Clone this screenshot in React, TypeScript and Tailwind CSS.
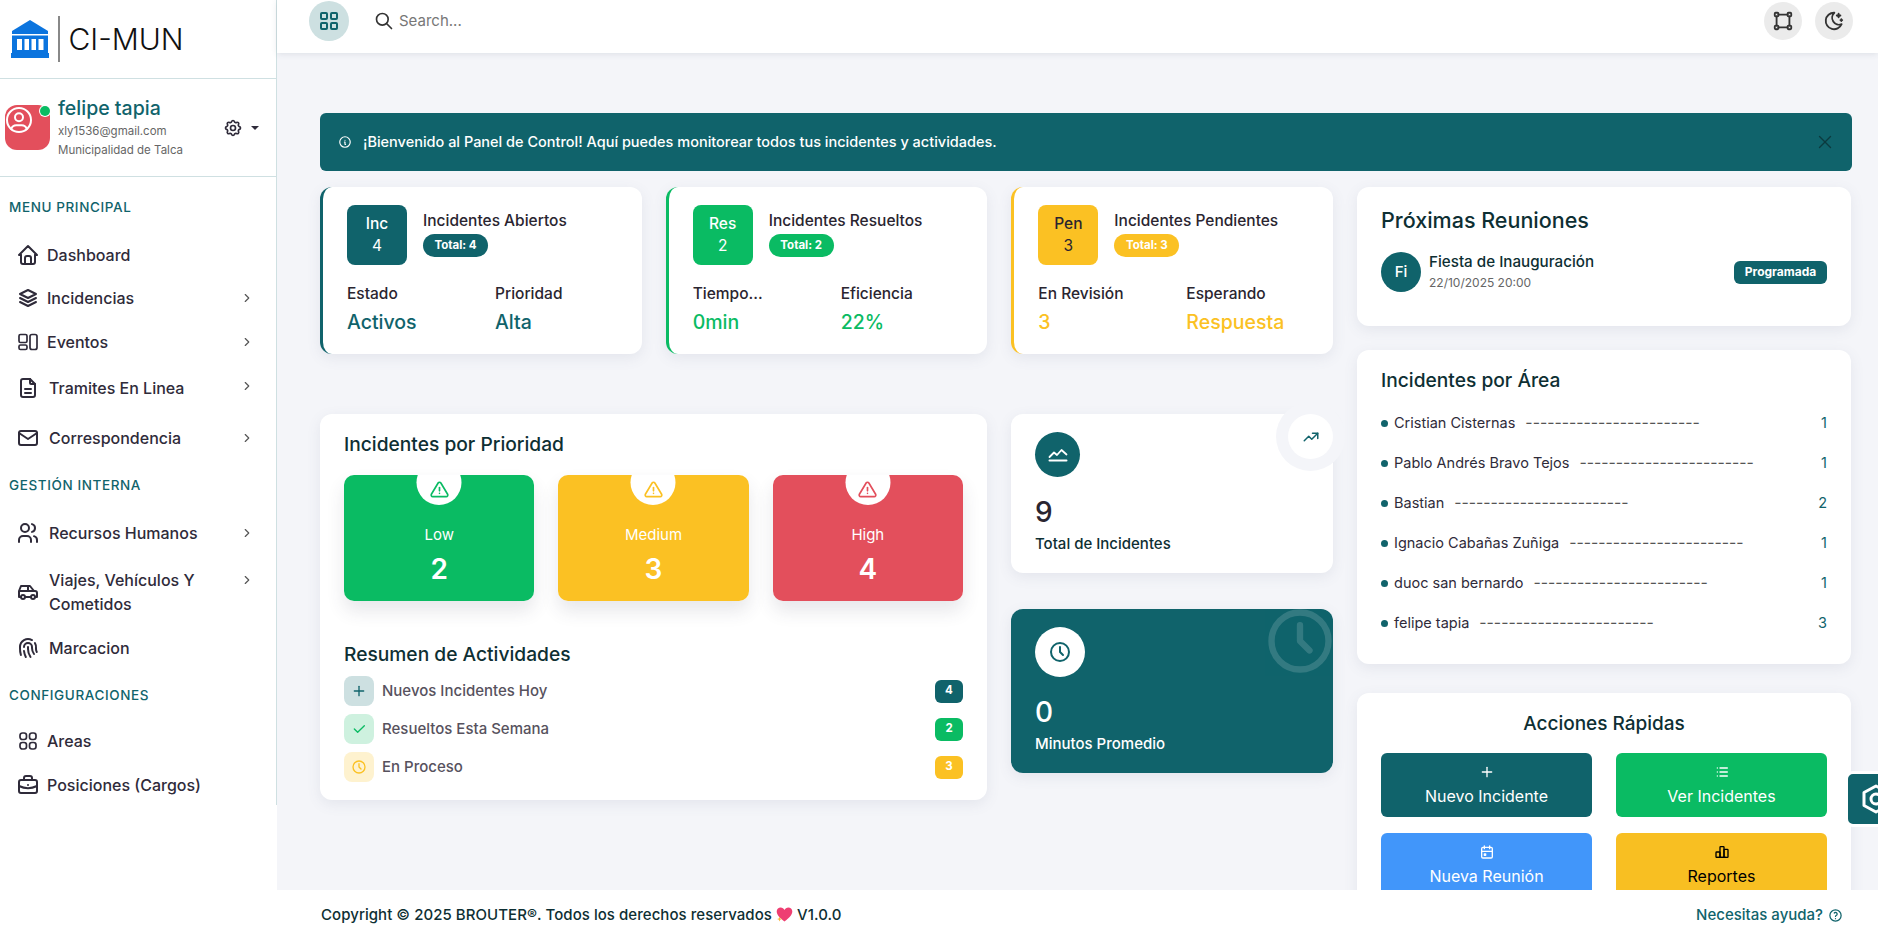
import {
  TbAlertTriangle,
  TbBriefcase,
  TbCalendarEvent,
  TbCar,
  TbCheck,
  TbChartBar,
  TbChevronRight,
  TbClock,
  TbFileDescription,
  TbFingerprint,
  TbHelp,
  TbHome,
  TbInfoCircle,
  TbLayoutGrid,
  TbList,
  TbMail,
  TbMoonStars,
  TbPlus,
  TbSearch,
  TbSettings,
  TbStack2,
  TbTrendingUp,
  TbUserCircle,
  TbUsers,
  TbVector,
  TbX,
} from "react-icons/tb";

const BankLogo = () => (
  <svg width="38" height="38" viewBox="0 0 38 38" fill="#0b74de">
    <path d="M19 0 L37 11 V14 H1 V11 Z" />
    <path d="M1 15.500h36v17.500H1z" />
    <path d="M0 33h38v5H0z" />
    <path d="M6 19h5v11H6zM13.500 19h4.500v11h-4.500zM20.500 19h4.500v11h-4.500zM27.500 19h5v11h-5z" fill="#fff" />
  </svg>
);

const EventIcon = () => (
  <svg width="20" height="20" viewBox="0 0 20 20" fill="none" stroke="currentColor" strokeWidth="1.700">
    <rect x="1" y="2.500" width="8" height="8" rx="1.500" />
    <rect x="1" y="13" width="8" height="4.500" rx="1.500" />
    <rect x="12" y="2.500" width="7" height="15" rx="2" />
  </svg>
);

const AreasIcon = () => (
  <svg width="20" height="20" viewBox="0 0 20 20" fill="none" stroke="currentColor" strokeWidth="1.700">
    <rect x="2" y="2" width="6.500" height="6.500" rx="2.400" />
    <rect x="11.500" y="2" width="6.500" height="6.500" rx="2.400" />
    <rect x="2" y="11.500" width="6.500" height="6.500" rx="2.400" />
    <rect x="11.500" y="11.500" width="6.500" height="6.500" rx="2.400" />
  </svg>
);

const AreaChartIcon = () => (
  <svg width="20" height="20" viewBox="0 0 20 20" fill="none" stroke="#fff" strokeWidth="1.800" strokeLinecap="round" strokeLinejoin="round">
    <path d="M1.500 12 L6 7.500 L9 10 L13.500 5 L18.500 9.500" />
    <path d="M1.500 15.500 H18.500" strokeWidth="2" />
  </svg>
);

const HexGear = () => (
  <svg width="30" height="30" viewBox="0 0 30 30" fill="none" stroke="currentColor" strokeWidth="3" strokeLinejoin="round">
    <path d="M15 2 L27 8.500 V21.500 L15 28 L3 21.500 V8.500 Z" />
    <circle cx="15" cy="15" r="5" />
  </svg>
);

const Heart = () => (
  <svg width="17" height="17" viewBox="0 0 24 24" className="inline-block align-[-3px]">
    <path d="M12 22 C4 16 1 12 1 7.500 C1 4 3.800 2 6.500 2 C9 2 11 3.500 12 5.500 C13 3.500 15 2 17.500 2 C20.200 2 23 4 23 7.500 C23 12 20 16 12 22 Z" fill="#ee3f72" />
    <path d="M5 15 l1 2.500 2.500 1 -2.500 1 -1 2.500 -1 -2.500 -2.500 -1 2.500 -1z" fill="#f9b53c" />
  </svg>
);

const menuText = "text-[16px] font-medium text-[#2f2b3a]";

function MenuItem({
  icon,
  label,
  h,
  arrow = true,
  gap = "gap-[7px]",
  arrowPos = "",
}: {
  icon: React.ReactNode;
  label: string;
  h: string;
  arrow?: boolean;
  gap?: string;
  arrowPos?: string;
}) {
  return (
    <div className={`flex items-center pl-[16px] pr-[22px] ${h}`}>
      <div className={`flex flex-1 items-center ${gap} ${menuText}`}>
        <span className="flex w-[24px] shrink-0 justify-center">{icon}</span>
        <span className="leading-[24px]">{label}</span>
      </div>
      {arrow && <TbChevronRight size={14} className={`text-[#555] ${arrowPos}`} />}
    </div>
  );
}

function SectionTitle({ children, h }: { children: string; h: string }) {
  return (
    <div className={`flex items-center pl-[9px] text-[13.500px] font-medium tracking-[0.6px] text-[#10636b] ${h}`}>
      {children}
    </div>
  );
}

function Sidebar() {
  return (
    <aside className="h-full w-[277px] shrink-0 bg-white">
      <div className="h-[805px] border-r border-[#cfe0e2]">
        <div className="flex h-[79px] items-center border-b border-[#cfe0e2] pl-[11px]">
          <BankLogo />
          <div className="mx-[9px] h-[46px] w-[1.500px] bg-[#888]" />
          <span className="text-[30px] font-light leading-none text-[#111]">CI-MUN</span>
        </div>
        <div className="flex h-[98px] items-center border-b border-[#cfe0e2] pl-[5px] pr-[17px]">
          <div className="relative h-[45px] w-[45px] shrink-0 rounded-xl bg-[#e34f5c] text-white">
            <TbUserCircle size={32} className="absolute left-[-2px] top-[-1px]" strokeWidth={1.500} />
            <span className="absolute right-0 top-[1px] h-[10px] w-[10px] rounded-full bg-[#0abb63] ring-1 ring-white" />
          </div>
          <div className="ml-[8px] flex-1">
            <div className="text-[19.500px] font-medium leading-[24px] text-[#10636b]">felipe tapia</div>
            <div className="mt-[2px] text-[11.500px] leading-[19px] text-[#666]">xly1536@gmail.com</div>
            <div className="text-[11.500px] leading-[19px] text-[#666]">Municipalidad de Talca</div>
          </div>
          <TbSettings size={20} className="text-[#2f2b3a]" />
          <span className="ml-[8px] h-0 w-0 border-x-[4px] border-t-[4px] border-x-transparent border-t-[#2f2b3a]" />
        </div>
        <SectionTitle h="h-[60px]">MENU PRINCIPAL</SectionTitle>
        <MenuItem h="h-[42px] mt-[-3px]" arrow={false} icon={<TbHome size={24} />} label="Dashboard" />
        <MenuItem h="h-[44px]" icon={<TbStack2 size={24} />} label="Incidencias" />
        <MenuItem h="h-[44px]" icon={<EventIcon />} label="Eventos" />
        <MenuItem h="h-[48px]" gap="gap-[9px]" arrowPos="mt-[-4px]" icon={<TbFileDescription size={24} />} label="Tramites En Linea" />
        <MenuItem h="h-[51px]" gap="gap-[9px]" icon={<TbMail size={24} />} label="Correspondencia" />
        <SectionTitle h="h-[44px]">GESTIÓN INTERNA</SectionTitle>
        <MenuItem h="h-[52px]" gap="gap-[9px]" icon={<TbUsers size={24} />} label="Recursos Humanos" />
        <MenuItem h="h-[66px]" gap="gap-[9px]" arrowPos="mt-[-24px]" icon={<TbCar size={24} />} label="Viajes, Vehículos Y Cometidos" />
        <MenuItem h="h-[46px]" arrow={false} gap="gap-[9px]" icon={<TbFingerprint size={24} />} label="Marcacion" />
        <SectionTitle h="h-[48px]">CONFIGURACIONES</SectionTitle>
        <MenuItem h="h-[44px]" arrow={false} icon={<AreasIcon />} label="Areas" />
        <MenuItem h="h-[43px]" arrow={false} icon={<TbBriefcase size={24} />} label="Posiciones (Cargos)" />
      </div>
    </aside>
  );
}

function Header() {
  return (
    <header className="relative z-10 flex h-[53px] shrink-0 items-center bg-white pl-[32px] pr-[25px] pb-[12px] shadow-[0_1px_6px_rgba(60,70,90,0.12)]">
      <div className="flex h-[40px] w-[40px] items-center justify-center rounded-full bg-[#cde0e1] text-[#10636b]">
        <TbLayoutGrid size={24} />
      </div>
      <TbSearch size={20} className="ml-[25px] mt-[1px] text-[#333]" />
      <span className="ml-[5px] mt-[1px] flex-1 text-[15px] text-[#777]">Search...</span>
      <div className="flex h-[38px] w-[38px] items-center justify-center rounded-full bg-[#ebebeb] text-[#333]">
        <TbVector size={22} />
      </div>
      <div className="ml-[13px] flex h-[38px] w-[38px] items-center justify-center rounded-full bg-[#ebebeb] text-[#333]">
        <TbMoonStars size={22} />
      </div>
    </header>
  );
}

function StatCard({
  border,
  box,
  boxText,
  code,
  value,
  title,
  total,
  l1,
  l2,
  v1,
  v2,
  valueColor,
}: {
  border: string;
  box: string;
  boxText: string;
  code: string;
  value: string;
  title: string;
  total: string;
  l1: string;
  l2: string;
  v1: string;
  v2: string;
  valueColor: string;
}) {
  return (
    <div className={`h-[167px] rounded-xl border-l-[3px] bg-white pl-[24px] pr-[16px] pt-[18px] shadow-[0_4px_14px_rgba(90,100,130,0.1)] ${border}`}>
      <div className="flex">
        <div className={`flex h-[60px] w-[60px] flex-col items-center justify-center rounded-lg text-[15.500px] font-medium leading-[22px] ${box} ${boxText}`}>
          <span>{code}</span>
          <span className="font-normal">{value}</span>
        </div>
        <div className="ml-[16px]">
          <div className="mt-[6px] whitespace-nowrap text-[15.500px] font-medium leading-[20px] text-[#2a2530]">{title}</div>
          <div className={`mt-[3px] flex h-[23px] w-[65px] items-center justify-center rounded-full text-[11.500px] font-bold text-white ${box}`}>
            {total}
          </div>
        </div>
      </div>
      <div className="mt-[19px] grid grid-cols-[148px_1fr]">
        <div>
          <div className="truncate pr-[4px] text-[15.500px] font-medium leading-[20px] text-[#2a2530]">{l1}</div>
          <div className={`mt-[6px] text-[19.500px] font-medium leading-[24px] ${valueColor}`}>{v1}</div>
        </div>
        <div>
          <div className="text-[15.500px] font-medium leading-[20px] text-[#2a2530]">{l2}</div>
          <div className={`mt-[6px] text-[19.500px] font-medium leading-[24px] ${valueColor}`}>{v2}</div>
        </div>
      </div>
    </div>
  );
}

function PriorityBox({ bg, text, label, value }: { bg: string; text: string; label: string; value: string }) {
  return (
    <div className="rounded-[10px] shadow-[0_10px_18px_rgba(60,60,80,0.12)]">
      <div className={`relative flex h-[126px] flex-col items-center overflow-hidden rounded-[10px] pt-[49px] text-white ${bg}`}>
        <div className={`absolute left-1/2 top-[-15px] flex h-[45px] w-[45px] -translate-x-1/2 items-center justify-center rounded-full bg-white pt-[15px] ${text}`}>
          <TbAlertTriangle size={20} />
        </div>
        <div className="text-[15px] leading-[22px]">{label}</div>
        <div className="mt-[6px] text-[28px] font-semibold leading-[34px]">{value}</div>
      </div>
    </div>
  );
}

function ActivityRow({
  icon,
  iconBg,
  label,
  value,
  badge,
}: {
  icon: React.ReactNode;
  iconBg: string;
  label: string;
  value: string;
  badge: string;
}) {
  return (
    <div className="flex h-[30px] items-center">
      <div className={`flex h-[30px] w-[30px] items-center justify-center rounded-lg ${iconBg}`}>{icon}</div>
      <span className="ml-[8px] flex-1 text-[15px] font-medium text-[#57525e]">{label}</span>
      <span className={`flex h-[23px] w-[28px] items-center justify-center rounded-md text-[11.500px] font-bold text-white ${badge}`}>
        {value}
      </span>
    </div>
  );
}

const areas = [
  ["Cristian Cisternas", "1"],
  ["Pablo Andrés Bravo Tejos", "1"],
  ["Bastian", "2"],
  ["Ignacio Cabañas Zuñiga", "1"],
  ["duoc san bernardo", "1"],
  ["felipe tapia", "3"],
];

function QuickButton({
  icon,
  label,
  className,
}: {
  icon: React.ReactNode;
  label: string;
  className: string;
}) {
  return (
    <div className={`flex h-[64px] flex-col items-center justify-center rounded-md pt-[2px] ${className}`}>
      {icon}
      <span className="mt-[4px] text-[16px] leading-[24px]">{label}</span>
    </div>
  );
}

const card = "rounded-xl bg-white shadow-[0_4px_14px_rgba(90,100,130,0.1)]";

export default function App() {
  return (
    <div className="flex h-screen w-full overflow-hidden bg-[#f4f5f9] [font-family:Inter,sans-serif]">
      <Sidebar />
      <div className="relative flex h-full min-w-0 flex-1 flex-col">
        <Header />
        <main className="min-h-0 flex-1 overflow-hidden pl-[43px] pr-[26px] pt-[60px]">
          <div className="flex h-[58px] items-center rounded-[6px] bg-[#10636b] pl-[18px] pr-[16px] text-[14.500px] font-medium text-white">
            <TbInfoCircle size={14} />
            <span className="ml-[11px] flex-1">¡Bienvenido al Panel de Control! Aquí puedes monitorear todos tus incidentes y actividades.</span>
            <TbX size={22} strokeWidth={1.500} className="text-[#0b3a3f]" />
          </div>

          <div className="mt-[16px] grid grid-cols-[1013px_494px] gap-x-[24px]">
            <div>
              <div className="grid grid-cols-3 gap-x-[24px]">
                <StatCard
                  border="border-[#10636b]"
                  box="bg-[#10636b]"
                  boxText="text-white"
                  code="Inc"
                  value="4"
                  title="Incidentes Abiertos"
                  total="Total: 4"
                  l1="Estado"
                  l2="Prioridad"
                  v1="Activos"
                  v2="Alta"
                  valueColor="text-[#10636b]"
                />
                <StatCard
                  border="border-[#0abb63]"
                  box="bg-[#0abb63]"
                  boxText="text-white"
                  code="Res"
                  value="2"
                  title="Incidentes Resueltos"
                  total="Total: 2"
                  l1="Tiempo..."
                  l2="Eficiencia"
                  v1="0min"
                  v2="22%"
                  valueColor="text-[#0abb63]"
                />
                <StatCard
                  border="border-[#fbc123]"
                  box="bg-[#fbc123]"
                  boxText="text-[#2a2530]"
                  code="Pen"
                  value="3"
                  title="Incidentes Pendientes"
                  total="Total: 3"
                  l1="En Revisión"
                  l2="Esperando"
                  v1="3"
                  v2="Respuesta"
                  valueColor="text-[#fbc123]"
                />
              </div>

              <div className="mt-[60px] grid grid-cols-[667px_322px] gap-x-[24px]">
                <div className={`h-[386px] px-[24px] pt-[18px] ${card}`}>
                  <h2 className="text-[19.200px] font-medium leading-[24px] text-[#0e2f33]">Incidentes por Prioridad</h2>
                  <div className="mt-[19px] grid grid-cols-3 gap-x-[24px]">
                    <PriorityBox bg="bg-[#0abb63]" text="text-[#0abb63]" label="Low" value="2" />
                    <PriorityBox bg="bg-[#fbc123]" text="text-[#fbc123]" label="Medium" value="3" />
                    <PriorityBox bg="bg-[#e34f5c]" text="text-[#e34f5c]" label="High" value="4" />
                  </div>
                  <h2 className="mt-[41px] text-[19.200px] font-medium leading-[24px] text-[#0e2f33]">Resumen de Actividades</h2>
                  <div className="mt-[10px] flex flex-col gap-y-[8px]">
                    <ActivityRow
                      iconBg="bg-[#cde0e1]"
                      icon={<TbPlus size={16} className="text-[#10636b]" />}
                      label="Nuevos Incidentes Hoy"
                      value="4"
                      badge="bg-[#10636b]"
                    />
                    <ActivityRow
                      iconBg="bg-[#cef1df]"
                      icon={<TbCheck size={16} className="text-[#0abb63]" />}
                      label="Resueltos Esta Semana"
                      value="2"
                      badge="bg-[#0abb63]"
                    />
                    <ActivityRow
                      iconBg="bg-[#fef2cf]"
                      icon={<TbClock size={16} className="text-[#fbc123]" />}
                      label="En Proceso"
                      value="3"
                      badge="bg-[#fbc123]"
                    />
                  </div>
                </div>

                <div className="flex flex-col gap-y-[36px]">
                  <div className={`relative h-[159px] pl-[24px] pt-[18px] ${card}`}>
                    <div className="flex h-[45px] w-[45px] items-center justify-center rounded-full bg-[#10636b]">
                      <AreaChartIcon />
                    </div>
                    <div className="mt-[17px] text-[28px] font-medium leading-[36px] text-[#2a2530]">9</div>
                    <div className="mt-[4px] text-[15px] font-medium leading-[20px] text-[#0e2f33]">Total de Incidentes</div>
                    <div className="absolute right-0 top-0 flex h-[45px] w-[45px] items-center justify-center rounded-full bg-white text-[#10636b] ring-[12px] ring-[#f4f5f9]">
                      <TbTrendingUp size={18} />
                    </div>
                  </div>
                  <div className="relative h-[164px] overflow-hidden rounded-xl bg-[#10636b] pl-[24px] pt-[18px] text-white shadow-[0_4px_14px_rgba(90,100,130,0.1)]">
                    <div className="flex h-[50px] w-[50px] items-center justify-center rounded-full bg-white text-[#10636b]">
                      <TbClock size={24} />
                    </div>
                    <div className="mt-[17px] text-[28px] font-medium leading-[36px]">0</div>
                    <div className="mt-[4px] text-[15px] font-medium leading-[20px]">Minutos Promedio</div>
                    <TbClock size={76} className="absolute right-[-5px] top-[-6px] text-white opacity-[0.15]" />
                  </div>
                </div>
              </div>
            </div>

            <div className="flex flex-col gap-y-[24px]">
              <div className={`h-[139px] px-[24px] pt-[20px] ${card}`}>
                <h2 className="text-[21.500px] font-medium leading-[26px] text-[#0e2f33]">Próximas Reuniones</h2>
                <div className="mt-[18px] flex items-center">
                  <div className="flex h-[40px] w-[40px] items-center justify-center rounded-full bg-[#10636b] text-[15px] font-medium text-white">
                    Fi
                  </div>
                  <div className="ml-[8px] flex-1">
                    <div className="mt-[1px] text-[15.200px] font-medium leading-[20px] text-[#0e2f33]">Fiesta de Inauguración</div>
                    <div className="mt-[1px] text-[12px] leading-[20px] text-[#666]">22/10/2025 20:00</div>
                  </div>
                  <span className="flex h-[23px] w-[93px] items-center justify-center rounded-md bg-[#10636b] text-[12px] font-bold text-white">
                    Programada
                  </span>
                </div>
              </div>

              <div className={`h-[314px] px-[24px] pt-[18px] ${card}`}>
                <h2 className="text-[19.200px] font-medium leading-[24px] text-[#0e2f33]">Incidentes por Área</h2>
                <div className="mt-[11px]">
                  {areas.map(([name, count]) => (
                    <div key={name} className="flex h-[40px] items-center text-[14.500px] text-[#2f2b3a]">
                      <span className="mr-[6px] h-[7px] w-[7px] rounded-full bg-[#10636b]" />
                      <span>{name}</span>
                      <span className="ml-[10px] flex-1 text-[15.800px] text-[#555]">------------------------</span>
                      <span className="text-[#10636b]">{count}</span>
                    </div>
                  ))}
                </div>
              </div>

              <div className={`mt-[5px] h-[300px] px-[24px] pt-[19px] ${card}`}>
                <h2 className="text-center text-[19px] font-medium leading-[24px] text-[#0e2f33]">Acciones Rápidas</h2>
                <div className="mt-[17px] grid grid-cols-2 gap-x-[24px] gap-y-[16px]">
                  <QuickButton className="bg-[#10636b] text-white" icon={<TbPlus size={16} />} label="Nuevo Incidente" />
                  <QuickButton className="bg-[#0abb63] text-white" icon={<TbList size={16} />} label="Ver Incidentes" />
                  <QuickButton className="bg-[#4196fa] text-white" icon={<TbCalendarEvent size={16} />} label="Nueva Reunión" />
                  <QuickButton className="bg-[#f8bf22] text-black" icon={<TbChartBar size={16} />} label="Reportes" />
                </div>
              </div>
            </div>
          </div>
        </main>

        <footer className="relative z-10 flex h-[39px] shrink-0 items-center justify-between bg-white pl-[44px] pr-[35px] pt-[11px] text-[15px] font-medium">
          <span className="tracking-[0.05px] text-[#0e2f33]">
            Copyright © 2025 BROUTER®. Todos los derechos reservados <Heart /> V1.0.0
          </span>
          <span className="flex items-center gap-x-[5px] text-[#10636b]">
            Necesitas ayuda? <TbHelp size={15} />
          </span>
        </footer>

        <div className="absolute right-[-22px] top-[771px] z-20 flex h-[56px] w-[55px] items-center rounded-l-[8px] border-[3px] border-white bg-[#10636b] pl-[13px] text-white">
          <HexGear />
        </div>
      </div>
    </div>
  );
}
